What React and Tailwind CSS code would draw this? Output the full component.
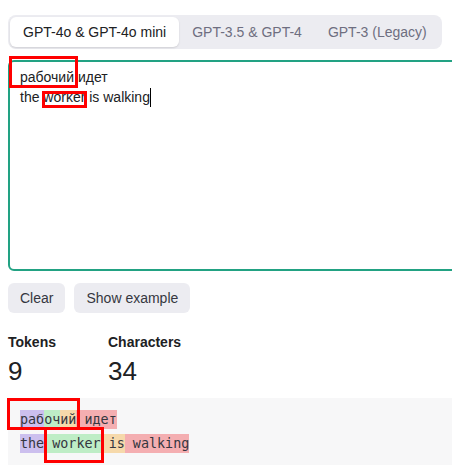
const TOKEN_COLORS = [
  'bg-[rgba(107,64,216,0.3)]',
  'bg-[rgba(104,222,122,0.4)]',
  'bg-[rgba(244,172,54,0.4)]',
  'bg-[rgba(239,65,70,0.4)]',
]

const TOKENS = [
  ['раб', 0],
  ['оч', 1],
  ['ий', 2],
  [' идет', 3],
  ['\n', 0],
  ['the', 0],
  [' worker', 1],
  [' is', 2],
  [' walking', 3],
]

const TABS = ['GPT-4o & GPT-4o mini', 'GPT-3.5 & GPT-4', 'GPT-3 (Legacy)']

function RedBox({ className }) {
  return <div className={`absolute border-[3px] border-[#ff0000] pointer-events-none ${className}`} />
}

export default function App() {
  return (
    <div className="relative w-[452px] h-[465px] overflow-hidden bg-white font-['Liberation_Sans',Arial,sans-serif] text-[#202123]">
      <div className="px-2 pt-[15px]">
        {/* Model tabs */}
        <div className="inline-flex rounded-lg bg-[#ececf1] p-[2px]">
          {TABS.map((tab, i) => (
            <div
              key={tab}
              className={`h-[30px] flex items-center px-[13px] text-[14px] font-medium rounded-md ${
                i === 0 ? 'bg-white text-[#202123] shadow-[0_1px_2px_rgba(0,0,0,0.12)]' : 'text-[#6e6e80]'
              }`}
            >
              {tab}
            </div>
          ))}
        </div>

        {/* Input */}
        <div className="mt-[11px] w-[480px] h-[211px] rounded-md border-2 border-[#22a283] pl-[10px] pt-[5px] text-[14px] leading-[20px] text-[#202123]">
          <div>рабочий идет</div>
          <div className="flex items-center">
            the worker is walking
            <span className="inline-block w-px h-[19px] bg-black" />
          </div>
        </div>

        {/* Buttons */}
        <div className="mt-3 flex gap-[9px]">
          <button className="h-[30px] px-3 rounded-md bg-[#ececf1] text-[14px] font-medium text-[#353740]">Clear</button>
          <button className="h-[30px] px-3 rounded-md bg-[#ececf1] text-[14px] font-medium text-[#353740]">Show example</button>
        </div>

        {/* Stats */}
        <div className="mt-[19px] flex gap-[52px]">
          <div>
            <div className="text-[14px] font-semibold leading-[20px]">Tokens</div>
            <div className="text-[26px] leading-[34px] mt-[2px]">9</div>
          </div>
          <div>
            <div className="text-[14px] font-semibold leading-[20px]">Characters</div>
            <div className="text-[26px] leading-[34px] mt-[2px]">34</div>
          </div>
        </div>

        {/* Token output */}
        <div className="mt-[10px] w-[480px] h-[80px] bg-[#f7f7f8] pl-3 pt-[10px] font-['DejaVu_Sans_Mono',monospace] text-[13.4px] leading-[24px] text-[#353740] whitespace-pre">
          {TOKENS.map(([text, c], i) =>
            text === '\n' ? (
              <br key={i} />
            ) : (
              <span key={i} className={`${TOKEN_COLORS[c]} py-[2px]`}>
                {text}
              </span>
            )
          )}
        </div>
      </div>

      {/* Annotation boxes */}
      <RedBox className="left-[9px] top-[56px] w-[69px] h-[32px]" />
      <RedBox className="left-[42px] top-[91px] w-[45px] h-[17px]" />
      <RedBox className="left-[7px] top-[398px] w-[73px] h-[32px]" />
      <RedBox className="left-[44px] top-[427px] w-[60px] h-[36px]" />
    </div>
  )
}
